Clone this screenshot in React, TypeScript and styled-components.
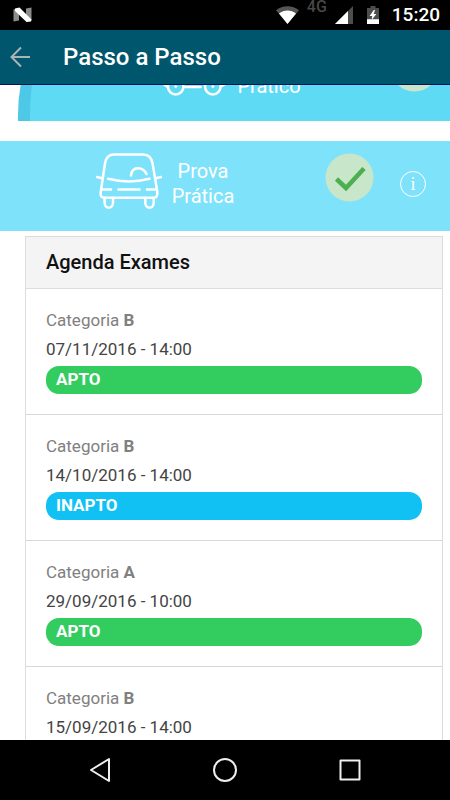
import React from "react";
import styled, { createGlobalStyle } from "styled-components";

const GlobalStyle = createGlobalStyle`
  *, *::before, *::after { box-sizing: border-box; }
  body { margin: 0; background: #fff; font-family: Roboto, sans-serif; }
  h1, h2, p, ul { margin: 0; padding: 0; }
  button { margin: 0; padding: 0; border: 0; background: none; font: inherit; color: inherit; cursor: pointer; }
`;

const Screen = styled.div`
  display: flex;
  flex-direction: column;
  height: 100vh;
  overflow: hidden;
`;

const StatusBar = styled.div`
  display: flex;
  flex: none;
  align-items: center;
  height: 30px;
  padding: 0 10px 0 13px;
  background: #000;
  color: #fff;
  svg { display: block; flex: none; }
`;

const StatusGroup = styled.div`
  display: flex;
  align-items: center;
  gap: 8px;
  margin-left: auto;
`;

const Network = styled.span`
  align-self: flex-start;
  color: #474747;
  font-size: 16px;
  font-weight: 500;
  line-height: 14px;
`;

const BatterySlot = styled.span`
  padding: 0 5px 0 6px;
`;

const Clock = styled.time`
  font-size: 19px;
  font-weight: 500;
  line-height: 30px;
`;

const AppBar = styled.header`
  display: flex;
  flex: none;
  align-items: center;
  gap: 32px;
  height: 55px;
  padding-left: 9px;
  border-bottom: 1px solid #0a1458;
  background: #00566c;
  color: #fff;
`;

const BackButton = styled.button`
  display: block;
  height: 22px;
  svg { display: block; }
`;

const Title = styled.h1`
  font-size: 24px;
  font-weight: 500;
  line-height: 32px;
`;

const Content = styled.main`
  flex: 1;
  min-height: 0;
  overflow-y: auto;
  scrollbar-width: none;
`;

/* The list rests scrolled part way through its first step. */
const Steps = styled.div`
  display: flex;
  flex-direction: column;
  gap: 20px;
  margin-top: -54px;
`;

const Step = styled.section<{ $nested?: boolean }>`
  display: flex;
  align-items: center;
  height: 90px;
  margin-left: ${(p) => (p.$nested ? "18px" : "0")};
  padding: ${(p) => (p.$nested ? "12px 11px 16px 132px" : "12px 24px 16px 96px")};
  border-left: ${(p) => (p.$nested ? "12px solid #4dc8e6" : "0")};
  border-top-left-radius: ${(p) => (p.$nested ? "40px 84px" : "0")};
  background: ${(p) => (p.$nested ? "#5fdaf5" : "#7fe2fb")};
  color: #fff;
`;

const StepArt = styled.span`
  flex: none;
  align-self: flex-start;
  svg { display: block; }
`;

const StepLabel = styled.h2`
  width: 82px;
  font-size: 20px;
  font-weight: 400;
  line-height: 25px;
  text-align: center;
`;

const Badge = styled.span`
  align-self: flex-start;
  flex: none;
  margin-left: auto;
  svg { display: block; }
`;

const InfoButton = styled.button`
  flex: none;
  width: 26px;
  height: 26px;
  margin-left: 26px;
  border: 1px solid #fff;
  border-radius: 50%;
  font-family: "Liberation Serif", serif;
  font-size: 18px;
  line-height: 24px;
  text-align: center;
`;

const Card = styled.section`
  margin: 5px 7px 0 25px;
  border: 1px solid #dcdcdc;
`;

const CardTitle = styled.h2`
  padding: 0 20px;
  border-bottom: 1px solid #dcdcdc;
  background: #f4f4f4;
  color: #111;
  font-size: 20px;
  font-weight: 500;
  line-height: 51px;
`;

const ExamList = styled.ul`
  list-style: none;
`;

const Exam = styled.li`
  padding: 17px 20px 20px;
  border-bottom: 1px solid #d8d8d8;
  font-size: 17px;
  line-height: 29px;
`;

const Category = styled.p`
  color: #808080;
`;

const ExamDate = styled.p`
  color: #444;
`;

const Result = styled.p<{ $passed: boolean }>`
  height: 28px;
  margin-top: 2px;
  padding: 0 10px;
  border-radius: 13px;
  background: ${(p) => (p.$passed ? "#33cd5f" : "#11c1f3")};
  color: #fff;
  font-weight: 700;
  line-height: 27px;
`;

const NavBar = styled.nav`
  display: grid;
  flex: none;
  grid-template-columns: repeat(3, 1fr);
  height: 60px;
  padding: 0 8.33%;
  background: #000;
`;

const NavButton = styled.button`
  display: flex;
  align-items: center;
  justify-content: center;
`;

const CheckBadge = () => (
  <Badge>
    <svg width="49" height="49" viewBox="0 0 49 49" role="img" aria-label="Concluído">
      <circle cx="24.5" cy="24.5" r="24" fill="#c8e6c9" />
      <path d="M11.5 26 21 35l18-19.5" fill="none" stroke="#4caf50" strokeWidth="4.6" />
    </svg>
  </Badge>
);

const CarIcon = () => (
  <svg width="66" height="58" viewBox="0 0 66 58" fill="none" stroke="#fff" strokeWidth="2.5" strokeLinecap="round" strokeLinejoin="round">
    <path d="M9 10.5C10 4.5 12.5 1.6 18 1.6h29c5.500 0 8.600 3 9.600 9l4.600 27.500c.6 4.400-.4 6.600-3.600 6.600H8.500c-3.300 0-4.300-2-3.800-5.400z" />
    <path d="M12 25.800c13 3.200 29 3.200 41.500 0" />
    <path d="M35 22.500c1-10 12-9 15.500-1.500" />
    <path d="M1 24l5 1.300M65 24l-5.500 1.300" />
    <path d="M6 36.600h9M22.500 36.600h21M51 36.600h9.500" />
    <path d="M8.600 45v4.500c0 7 8.400 7 8.400 0V45M49.300 45v4.500c0 7 8.400 7 8.400 0V45" />
  </svg>
);

const MotorcycleIcon = () => (
  <svg width="66" height="58" viewBox="0 0 66 58" fill="none" stroke="#fff" strokeWidth="2.5" strokeLinecap="round" strokeLinejoin="round">
    <circle cx="13.700" cy="43.600" r="7.800" />
    <circle cx="50.800" cy="43.600" r="7.800" />
    <circle cx="13.700" cy="43.600" r="1" fill="#fff" strokeWidth="1" />
    <circle cx="50.800" cy="43.600" r="1" fill="#fff" strokeWidth="1" />
    <path d="M22.500 44h16M5 43.500l-4-3c0-8 7-12 14-11h12l8-9h14l-5-9h7l7 20c5 1 6 4 6 9l-4 2.500" />
  </svg>
);

type ExamEntry = { category: string; date: string; result: string };

const exams: ExamEntry[] = [
  { category: "B", date: "07/11/2016 - 14:00", result: "APTO" },
  { category: "B", date: "14/10/2016 - 14:00", result: "INAPTO" },
  { category: "A", date: "29/09/2016 - 10:00", result: "APTO" },
  { category: "B", date: "15/09/2016 - 14:00", result: "INAPTO" },
];

export default function App() {
  return (
    <Screen>
      <GlobalStyle />
      <StatusBar>
        <svg width="19" height="16" viewBox="0 0 19 16">
          <path d="M.5 2.500 6 1v12.500L.5 14.500zM13 1.500l5.500-1v13L13 12z" fill="#8c8c8c" />
          <path d="M2 1.500 6.500.5 18.500 12.500l-.5 2-4.500.5L2 4z" fill="#fff" />
        </svg>
        <StatusGroup>
          <svg width="23" height="18" viewBox="0 0 23 18">
            <path d="M0 4.300C6.500-1.100 16.500-1.100 23 4.300L11.500 18z" fill="#555" />
            <path d="M3 7.500c5-4 12-4 17 0L11.500 18z" fill="#fff" />
          </svg>
          <Network>4G</Network>
          <svg width="18" height="18" viewBox="0 0 18 18">
            <path d="M18 0v18H0z" fill="#4d4d4d" />
            <path d="M13 5v13H0z" fill="#fff" />
          </svg>
          <BatterySlot>
            <svg width="12" height="18" viewBox="0 0 12 18">
              <path d="M3.500 0h5v2H12v16H0V2h3.500z" fill="#4d4d4d" />
              <path d="M0 13.300h12V18H0zM6.800 4 2.600 10h2.600L4.600 14l4.800-6H6.700L8 4z" fill="#fff" />
            </svg>
          </BatterySlot>
          <Clock>15:20</Clock>
        </StatusGroup>
      </StatusBar>

      <AppBar>
        <BackButton aria-label="Voltar">
          <svg width="22" height="22" viewBox="0 0 22 22" fill="none" stroke="#adb3b5" strokeWidth="2">
            <path d="M21 11H2.500M12 1.500 2.500 11l9.500 9.500" />
          </svg>
        </BackButton>
        <Title>Passo a Passo</Title>
      </AppBar>

      <Content>
        <Steps>
          <Step $nested>
            <StepArt><MotorcycleIcon /></StepArt>
            <StepLabel>Exame Prático</StepLabel>
            <CheckBadge />
          </Step>
          <Step>
            <StepArt><CarIcon /></StepArt>
            <StepLabel>Prova Prática</StepLabel>
            <CheckBadge />
            <InfoButton aria-label="Informações">i</InfoButton>
          </Step>
        </Steps>

        <Card>
          <CardTitle>Agenda Exames</CardTitle>
          <ExamList>
            {exams.map((exam) => (
              <Exam key={exam.date}>
                <Category>Categoria <b>{exam.category}</b></Category>
                <ExamDate>{exam.date}</ExamDate>
                <Result $passed={exam.result === "APTO"}>{exam.result}</Result>
              </Exam>
            ))}
          </ExamList>
        </Card>
      </Content>

      <NavBar>
        <NavButton aria-label="Voltar">
          <svg width="24" height="26" viewBox="0 0 24 26" fill="none" stroke="#eee" strokeWidth="2" strokeLinejoin="round">
            <path d="M21 2v22L3 13z" />
          </svg>
        </NavButton>
        <NavButton aria-label="Início">
          <svg width="26" height="26" viewBox="0 0 26 26" fill="none" stroke="#eee" strokeWidth="2">
            <circle cx="13" cy="13" r="11" />
          </svg>
        </NavButton>
        <NavButton aria-label="Recentes">
          <svg width="22" height="22" viewBox="0 0 22 22" fill="none" stroke="#eee" strokeWidth="2" strokeLinejoin="round">
            <path d="M1.500 1.500h19v19h-19z" />
          </svg>
        </NavButton>
      </NavBar>
    </Screen>
  );
}
